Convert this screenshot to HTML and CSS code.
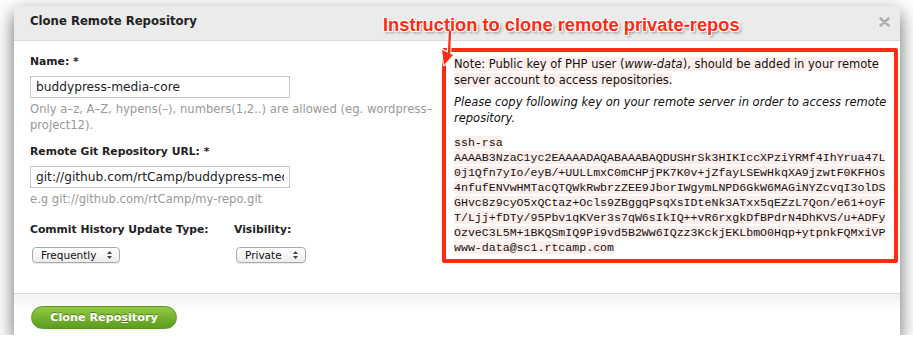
FILE: index.html
```html
<!DOCTYPE html>
<html lang="en">

<head>
    <meta charset="UTF-8">
    <title>Clone Remote Repository</title>
    <link rel="stylesheet" href="styles.css">
</head>

<body>
    <div class="dialog">
        <div class="dialog-head">
            <span class="dialog-title">Clone Remote Repository</span>
            <svg class="close" width="11" height="10" viewBox="0 0 11 10">
                <path d="M1.5 1.5 L9.5 8.5 M9.5 1.5 L1.5 8.5" stroke="#adadad" stroke-width="2.6" stroke-linecap="round" />
            </svg>
        </div>

        <div class="dialog-body">
            <div class="form-col">
                <label for="name" class="label">Name: *</label>
                <input type="text" id="name" class="input" value="buddypress-media-core" />
                <p class="hint">Only a–z, A–Z, hypens(–), numbers(1,2..) are allowed (eg. wordpress–project12).</p>

                <label for="url" class="label label-gap">Remote Git Repository URL: *</label>
                <input type="text" id="url" class="input" value="git://github.com/rtCamp/buddypress-media-core.git" />
                <p class="hint">e.g git://github.com/rtCamp/my-repo.git</p>

                <div class="select-row">
                    <div class="select-group first">
                        <span class="label">Commit History Update Type:</span>
                        <span class="select select-freq">Frequently
                            <svg width="5" height="8" viewBox="0 0 5 8"><path d="M0 3 L2.5 0 L5 3 Z M0 5 L2.5 8 L5 5 Z" fill="#444" /></svg>
                        </span>
                    </div>
                    <div class="select-group">
                        <span class="label">Visibility:</span>
                        <span class="select select-vis">Private
                            <svg width="5" height="8" viewBox="0 0 5 8"><path d="M0 3 L2.5 0 L5 3 Z M0 5 L2.5 8 L5 5 Z" fill="#444" /></svg>
                        </span>
                    </div>
                </div>
            </div>

            <div class="key-col">
                <p class="note"><span class="mark">Note: Public key of PHP user (</span><em class="mark">www-data</em><span class="mark">), should be added in your remote server account to access repositories.</span></p>
                <p class="note"><em>Please copy following key on your remote server in order to access remote repository.</em></p>
                <code class="key"><span class="mark">ssh-rsa</span><br><span class="mark">AAAAB3NzaC1yc2EAAAADAQABAAABAQDUSHrSk3HIKIccXPziYRMf4IhYrua47L</span><br><span class="mark">0j1Qfn7yIo/eyB/+UULLmxC0mCHPjPK7K0v+jZfayLSEwHkqXA9jzwtF0KFHOs</span><br><span class="mark">4nfufENVwHMTacQTQWkRwbrzZEE9JborIWgymLNPD6GkW6MAGiNYZcvqI3olDS</span><br><span class="mark">GHvc8z9cyO5xQCtaz+Ocls9ZBggqPsqXsIDteNk3ATxx5qEZzL7Qon/e61+oyF</span><br><span class="mark">T/Ljj+fDTy/95Pbv1qKVer3s7qW6sIkIQ++vR6rxgkDfBPdrN4DhKVS/u+ADFy</span><br><span class="mark">OzveC3L5M+1BKQSmIQ9Pi9vd5B2Ww6IQzz3KckjEKLbmO0Hqp+ytpnkFQMxiVP</span><br><span class="mark">www-data@sc1.rtcamp.com</span></code>
            </div>
        </div>

        <div class="dialog-foot">
            <button class="button">Clone Repo<u>s</u>itory</button>
        </div>
    </div>

    <!-- annotation drawn over the screenshot -->
    <div class="callout">Instruction to clone remote private-repos</div>
    <svg class="callout-arrow" width="20" height="40" viewBox="0 0 20 40">
        <path d="M12 1 L11 22" stroke="#fff" stroke-width="4.5" stroke-linecap="round" />
        <path d="M4 19 L15 24 L6 34 Z" fill="#fff" stroke="#fff" stroke-width="2.5" stroke-linejoin="round" />
        <path d="M12 1 L11 22" stroke="#ff2a12" stroke-width="2.4" stroke-linecap="round" />
        <path d="M4 19 L15 24 L6 34 Z" fill="#ff2a12" />
    </svg>
</body>

</html>
```

FILE: styles.css
```css
body {
    margin: 0;
    background: #fff;
    font-family: "DejaVu Sans", "Liberation Sans", sans-serif;
    color: #222;
}

.dialog {
    margin: 6px 0 0 14px;
    width: 886px;
    background: #fff;
    box-shadow: 0 7px 18px rgba(0, 0, 0, 0.6);
}

.dialog-head {
    box-sizing: border-box;
    height: 35px;
    background: #ebebeb;
    border-bottom: 1px solid #dadada;
    padding: 0 10px 5px 16px;
    display: flex;
    align-items: center;
    justify-content: space-between;
}

.dialog-title {
    font-size: 11.7px;
    font-weight: bold;
    color: #222;
}

.close {
    margin-top: 2px;
}

.dialog-body {
    display: flex;
    height: 252px;
    padding-left: 16px;
}

.form-col {
    width: 400px;
    padding-top: 13px;
}

.label {
    display: block;
    font-size: 10.8px;
    font-weight: bold;
    line-height: 16px;
    margin-bottom: 6px;
}

.label-gap {
    margin-top: 11px;
}

.input {
    display: block;
    box-sizing: border-box;
    width: 260px;
    height: 22px;
    margin: 0;
    padding: 0 5px;
    border: 1px solid #c6c6c6;
    font-family: "DejaVu Sans", sans-serif;
    font-size: 12.2px;
    color: #222;
}

.hint {
    margin: 3px 0 0;
    width: 410px;
    font-size: 11.6px;
    line-height: 16px;
    color: #999;
}

.select-row {
    display: flex;
    margin-top: 15px;
}

.select-group.first {
    width: 204px;
}

.select {
    display: inline-flex;
    align-items: center;
    justify-content: space-between;
    box-sizing: border-box;
    height: 16px;
    margin: 2px 0 0 2px;
    padding: 0 7px 0 8px;
    border: 1px solid #a9a9a9;
    border-radius: 4px;
    background: linear-gradient(#ffffff, #ececec);
    box-shadow: 0 1px 0 rgba(0, 0, 0, 0.08);
    font-size: 10.5px;
    color: #111;
}

.select-freq {
    width: 88px;
}

.select-vis {
    width: 70px;
}

.key-col {
    box-sizing: border-box;
    width: 456px;
    height: 215px;
    margin: 7px 0 0 12px;
    padding: 4px 6px 0 8px;
    border: 4px solid #ff2a12;
    border-radius: 2px;
}

.note {
    margin: 0 0 6px;
    font-size: 11.5px;
    line-height: 16px;
    color: #111;
}

.mark {
    background: #fdefec;
}

.key {
    display: block;
    margin-top: 9px;
    font-family: "Liberation Mono", monospace;
    font-size: 11.6px;
    line-height: 15px;
    white-space: nowrap;
    color: #111;
}

.dialog-foot {
    height: 42px;
    border-top: 1px solid #d8d8d8;
    background: linear-gradient(#f2f2f2, #ffffff 40%);
    padding: 12px 0 0 17px;
    box-sizing: border-box;
}

.button {
    width: 146px;
    height: 23px;
    border: 1px solid #5b9621;
    border-radius: 12px;
    background: linear-gradient(#94cb46, #72b02d 55%, #5e9b21);
    color: #fff;
    font-family: "DejaVu Sans", sans-serif;
    font-size: 11.2px;
    font-weight: bold;
    text-shadow: 0 -1px 0 rgba(0, 0, 0, 0.35);
    padding: 0;
}

.callout {
    position: absolute;
    left: 383px;
    top: 14px;
    font-family: "Liberation Sans", Arial, sans-serif;
    font-size: 18.3px;
    font-weight: bold;
    color: #ff2a12;
    text-shadow: 1px 0 0 #fff, -1px 0 0 #fff, 0 1px 0 #fff, 0 -1px 0 #fff,
        1px 1px 0 #fff, -1px -1px 0 #fff, 1px -1px 0 #fff, -1px 1px 0 #fff,
        2px 2px 3px rgba(0, 0, 0, 0.45);
}

.callout-arrow {
    position: absolute;
    left: 438px;
    top: 31px;
}
```
